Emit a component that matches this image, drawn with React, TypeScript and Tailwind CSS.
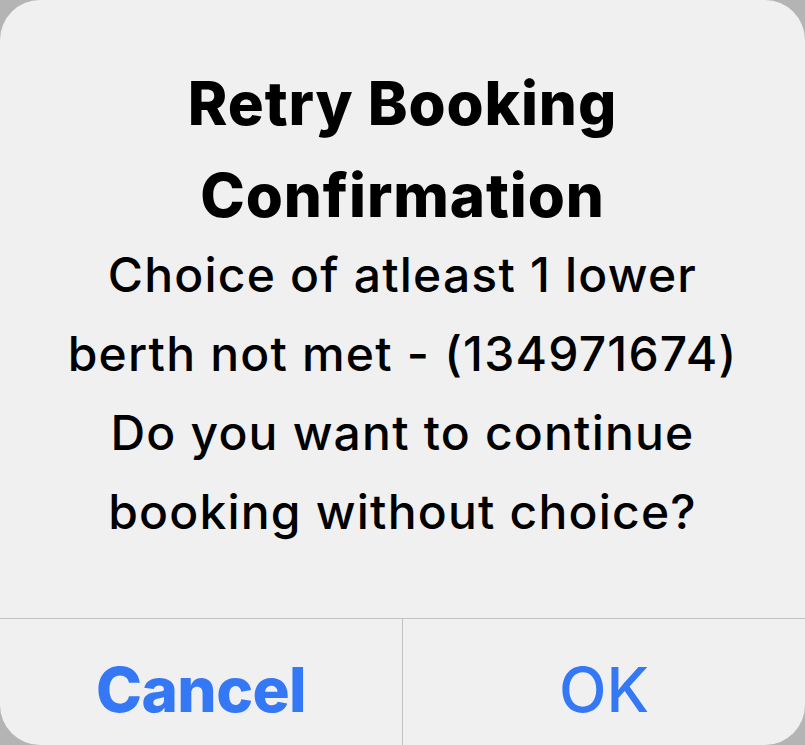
export default function App() {
  return (
    <div className="w-[805px] h-[745px] bg-[#b4b4b4] overflow-hidden" style={{ fontFamily: "Inter, 'Noto Sans', sans-serif" }}>
      <div className="w-full h-full bg-[#f0f0f0] rounded-[40px] flex flex-col">
        {/* Message */}
        <div className="h-[618px] flex flex-col items-center text-center text-black pt-[57px]">
          <h2 className="text-[60px] font-extrabold leading-[92px] tracking-[0.015em]">
            Retry Booking
            <br />
            Confirmation
          </h2>
          <p className="text-[48px] font-medium leading-[79px] tracking-[0.025em] -mt-[6px]">
            Choice of atleast 1 lower
            <br />
            berth not met - (134971674)
            <br />
            Do you want to continue
            <br />
            booking without choice?
          </p>
        </div>

        {/* Actions */}
        <div className="flex-1 flex border-t border-[#c2c2c2]">
          <button className="flex-1 flex items-center justify-center pt-[15px] text-[62px] font-extrabold tracking-[-0.01em] text-[#3478f6]">
            Cancel
          </button>
          <div className="w-px bg-[#c2c2c2]" />
          <button className="flex-1 flex items-center justify-center pt-[15px] text-[62px] font-medium text-[#3478f6]">
            OK
          </button>
        </div>
      </div>
    </div>
  );
}
